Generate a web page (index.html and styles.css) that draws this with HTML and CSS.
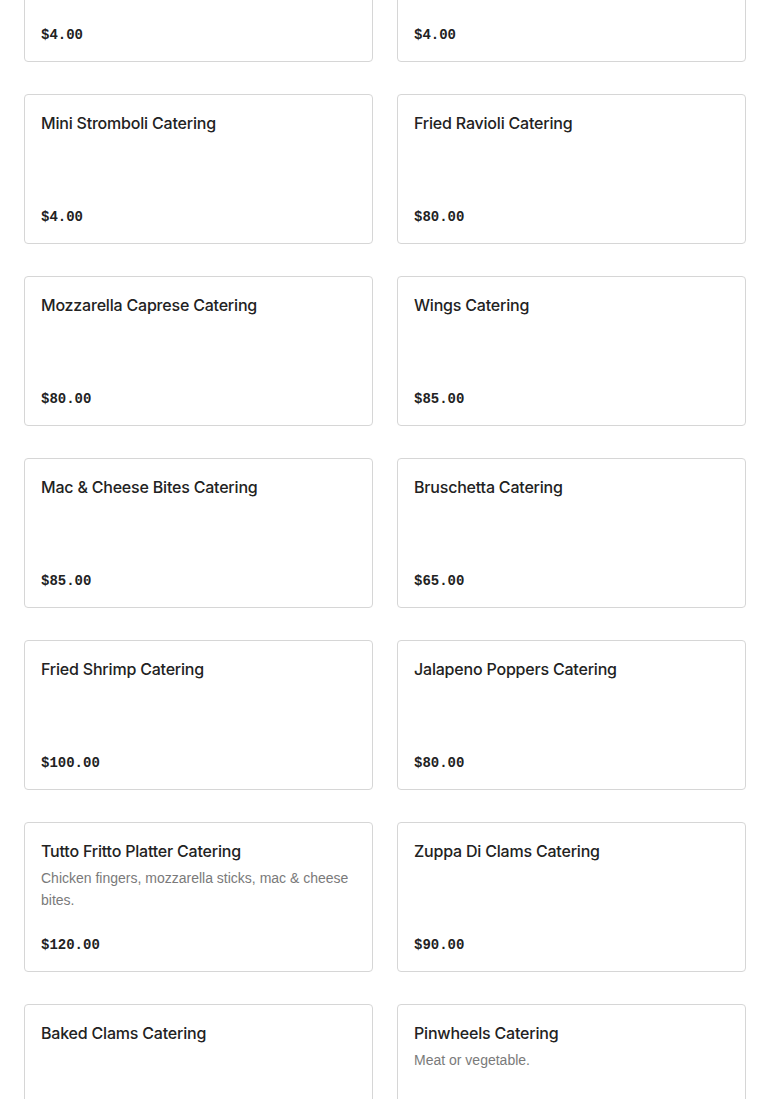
FILE: index.html
```html
<!DOCTYPE html>
<html>
<head>
<meta charset="utf-8">
<link rel="stylesheet" href="styles.css">
</head>
<body>
<div class="grid">
  <div class="card"><div class="title">Garlic Knots Catering</div><div class="price">$4.00</div></div>
  <div class="card"><div class="title">Rice Balls Catering</div><div class="price">$4.00</div></div>
  <div class="card"><div class="title">Mini Stromboli Catering</div><div class="price">$4.00</div></div>
  <div class="card"><div class="title">Fried Ravioli Catering</div><div class="price">$80.00</div></div>
  <div class="card"><div class="title">Mozzarella Caprese Catering</div><div class="price">$80.00</div></div>
  <div class="card"><div class="title">Wings Catering</div><div class="price">$85.00</div></div>
  <div class="card"><div class="title">Mac &amp; Cheese Bites Catering</div><div class="price">$85.00</div></div>
  <div class="card"><div class="title">Bruschetta Catering</div><div class="price">$65.00</div></div>
  <div class="card"><div class="title">Fried Shrimp Catering</div><div class="price">$100.00</div></div>
  <div class="card"><div class="title">Jalapeno Poppers Catering</div><div class="price">$80.00</div></div>
  <div class="card"><div class="title">Tutto Fritto Platter Catering</div><div class="desc">Chicken fingers, mozzarella sticks, mac &amp; cheese bites.</div><div class="price">$120.00</div></div>
  <div class="card"><div class="title">Zuppa Di Clams Catering</div><div class="price">$90.00</div></div>
  <div class="card"><div class="title">Baked Clams Catering</div><div class="price">$90.00</div></div>
  <div class="card"><div class="title">Pinwheels Catering</div><div class="desc">Meat or vegetable.</div><div class="price">$60.00</div></div>
</div>
</body>
</html>
```
FILE: styles.css
```css
html, body {
  margin: 0;
  padding: 0;
  background: #fff;
  overflow: hidden;
}
body {
  font-family: "Liberation Sans", Arial, sans-serif;
  color: #222;
}
.grid {
  display: grid;
  grid-template-columns: 1fr 1fr;
  column-gap: 24px;
  row-gap: 32px;
  padding: 0 24px;
  margin-top: -88px;
}
.card {
  box-sizing: border-box;
  height: 150px;
  border: 1px solid #d6d6d6;
  border-radius: 4px;
  padding: 16px 16px 14px;
  display: flex;
  flex-direction: column;
}
.title {
  font-family: Inter, "Liberation Sans", sans-serif;
  font-size: 16px;
  line-height: 24px;
  font-weight: 500;
  letter-spacing: -0.2px;
  color: #222;
}
.desc {
  margin-top: 4px;
  font-size: 14px;
  line-height: 22px;
  color: #7a7a7a;
}
.price {
  margin-top: auto;
  font-family: "Liberation Mono", monospace;
  font-size: 14px;
  line-height: 24px;
  font-weight: 700;
  color: #222;
}
```
